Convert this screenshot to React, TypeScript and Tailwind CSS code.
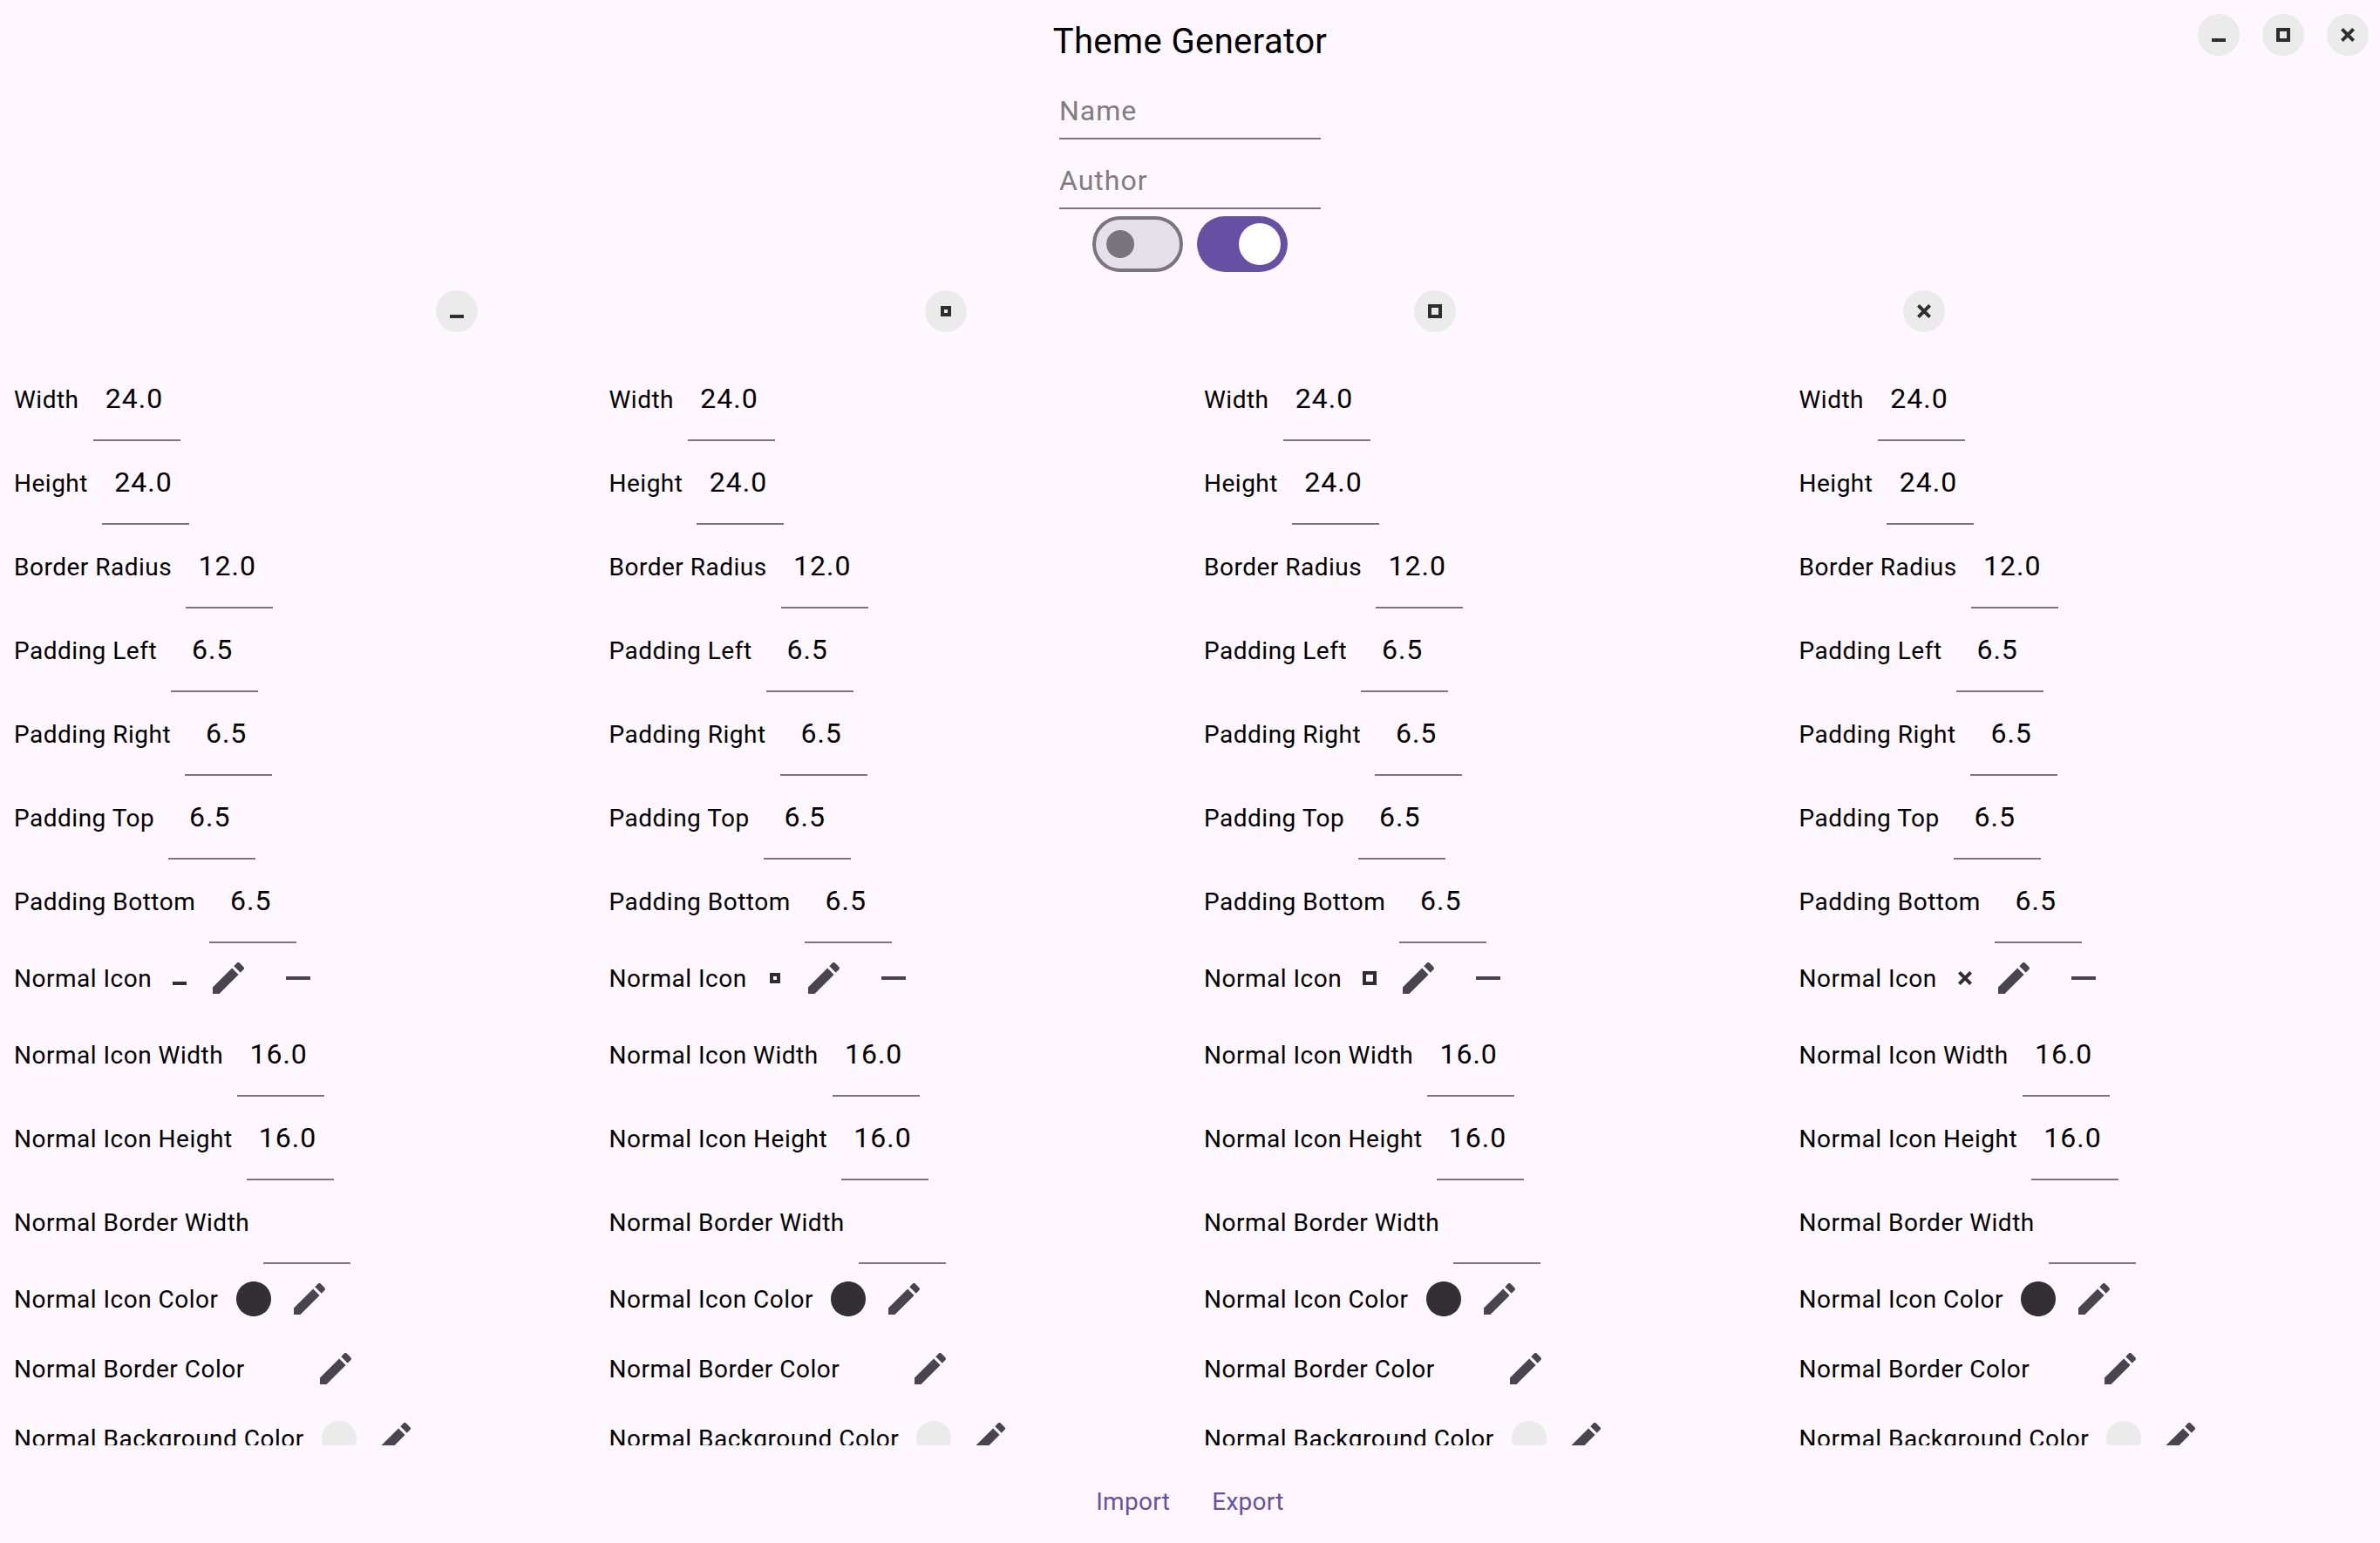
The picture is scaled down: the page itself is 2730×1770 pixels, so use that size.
import { MdCircle, MdEdit, MdRemove } from 'react-icons/md';

type Row =
	| { kind: 'field'; label: string; value?: string }
	| { kind: 'icon'; label: string }
	| { kind: 'color'; label: string; color?: string };

const rows: Row[] = [
	{ kind: 'field', label: 'Width', value: '24.0' },
	{ kind: 'field', label: 'Height', value: '24.0' },
	{ kind: 'field', label: 'Border Radius', value: '12.0' },
	{ kind: 'field', label: 'Padding Left', value: '6.5' },
	{ kind: 'field', label: 'Padding Right', value: '6.5' },
	{ kind: 'field', label: 'Padding Top', value: '6.5' },
	{ kind: 'field', label: 'Padding Bottom', value: '6.5' },
	{ kind: 'icon', label: 'Normal Icon' },
	{ kind: 'field', label: 'Normal Icon Width', value: '16.0' },
	{ kind: 'field', label: 'Normal Icon Height', value: '16.0' },
	{ kind: 'field', label: 'Normal Border Width' },
	{ kind: 'color', label: 'Normal Icon Color', color: 'text-[#333033]' },
	{ kind: 'color', label: 'Normal Border Color' },
	{ kind: 'color', label: 'Normal Background Color', color: 'text-[#ebebeb]' },
];

const columns = ['minimize', 'maximize', 'restore', 'close'] as const;
type WindowIconName = (typeof columns)[number];

function WindowIcon({ name }: { name: WindowIconName }) {
	return (
		<svg viewBox="0 0 32 32" className="w-8 h-8 shrink-0 text-[#2e2e2e]">
			{name === 'minimize' && <rect x="8" y="20" width="16" height="4" fill="currentColor" />}
			{name === 'maximize' && <rect x="12" y="12" width="8" height="8" fill="none" stroke="currentColor" strokeWidth="4" />}
			{name === 'restore' && <rect x="10" y="10" width="12" height="12" fill="none" stroke="currentColor" strokeWidth="4" />}
			{name === 'close' && <path d="M9.4 9.4l13.2 13.2M22.6 9.4l-13.2 13.2" fill="none" stroke="currentColor" strokeWidth="4" />}
		</svg>
	);
}

function WindowButton({ name }: { name: WindowIconName }) {
	return (
		<div className="w-12 h-12 rounded-full bg-[#ebebeb] flex items-center justify-center">
			<WindowIcon name={name} />
		</div>
	);
}

function IconButton({ children }: { children: React.ReactNode }) {
	return <div className="w-20 h-20 shrink-0 flex items-center justify-center text-[#49454f]">{children}</div>;
}

function Label({ text }: { text: string }) {
	return <span className="pt-[2px] text-[28px] leading-10 tracking-[0.5px] text-black whitespace-nowrap">{text}</span>;
}

function SettingRow({ row, icon }: { row: Row; icon: WindowIconName }) {
	if (row.kind === 'field') {
		return (
			<div className="h-24 flex items-center gap-4">
				<Label text={row.label} />
				<div className="w-[100px] h-24 shrink-0 border-b-2 border-[#79747e] flex items-center justify-center pr-[5px] text-[32px] tracking-[1px] text-black">
					{row.value}
				</div>
			</div>
		);
	}
	if (row.kind === 'icon') {
		return (
			<div className="h-20 flex items-center gap-4">
				<Label text={row.label} />
				<div className="flex items-center">
					<WindowIcon name={icon} />
					<IconButton><MdEdit size={48} /></IconButton>
					<IconButton><MdRemove size={48} /></IconButton>
				</div>
			</div>
		);
	}
	return (
		<div className="h-20 flex items-center gap-4">
			<Label text={row.label} />
			<div className="flex items-center">
				<div className={`w-12 h-12 shrink-0 ${row.color ?? ''}`}>
					{row.color && <MdCircle size={48} />}
				</div>
				<IconButton><MdEdit size={48} /></IconButton>
			</div>
		</div>
	);
}

export default function App() {
	return (
		<div className="relative w-full h-[1770px] overflow-hidden flex flex-col bg-[#fef7ff] font-['Roboto',sans-serif]">
			<div className="absolute top-4 right-[13px] flex gap-[26px]">
				<WindowButton name="minimize" />
				<WindowButton name="restore" />
				<WindowButton name="close" />
			</div>

			<div className="flex flex-col items-center">
				<h1 className="mt-[22px] mb-[6px] text-[40px] leading-[52px] tracking-[0.4px] text-black">Theme Generator</h1>
				{['Name', 'Author'].map((hint) => (
					<div key={hint} className="w-[300px] h-20 border-b-2 border-[#79747e] flex items-end pb-[7px] text-[32px] leading-[48px] tracking-[1px] text-[#807c82]">
						{hint}
					</div>
				))}
				<div className="h-20 flex items-center gap-4">
					<div className="w-[104px] h-16 rounded-full border-4 border-[#79747e] bg-[#e6e0e9] flex items-center pl-3">
						<div className="w-8 h-8 rounded-full bg-[#79747e]" />
					</div>
					<div className="w-[104px] h-16 rounded-full bg-[#6750a4] flex items-center justify-end pr-2">
						<div className="w-12 h-12 rounded-full bg-white" />
					</div>
				</div>
			</div>

			<div className="flex justify-around px-[243px] pt-[13px] pb-[29px]">
				{columns.map((name) => (
					<WindowButton key={name} name={name} />
				))}
			</div>

			<div className="flex-1 min-h-0 overflow-hidden grid grid-cols-4">
				{columns.map((name) => (
					<div key={name} className="pl-4">
						{rows.map((row) => (
							<SettingRow key={row.label} row={row} icon={name} />
						))}
					</div>
				))}
			</div>

			<div className="h-[112px] pt-[18px] flex items-center justify-center text-[28px] tracking-[0.3px] text-[#6750a4]">
				<div className="h-20 px-6 flex items-center">Import</div>
				<div className="h-20 px-6 flex items-center">Export</div>
			</div>
		</div>
	);
}
